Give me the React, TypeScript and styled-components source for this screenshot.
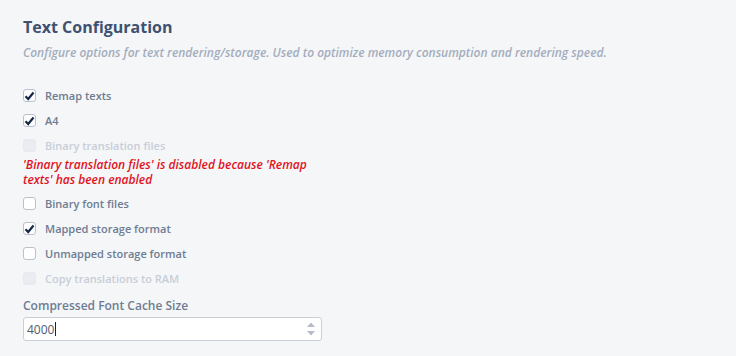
import styled, { createGlobalStyle } from 'styled-components'

const GlobalStyle = createGlobalStyle`
  html, body {
    margin: 0;
    padding: 0;
    background: #f5f6f8;
  }
  body {
    font-family: 'Open Sans', 'Liberation Sans', sans-serif;
  }
`

const Page = styled.div`
  display: flex;
  flex-direction: column;
  padding: 14px 23px 0;
  width: 736px;
  height: 356px;
  box-sizing: border-box;
`

const Title = styled.h2`
  margin: 0;
  font-size: 16px;
  font-weight: 700;
  line-height: 26px;
  color: #3e5170;
`

const Subtitle = styled.p`
  margin: 5px 0 0;
  font-size: 12px;
  font-style: italic;
  font-weight: 600;
  line-height: 16px;
  color: #a3adbd;
`

const Options = styled.div`
  display: flex;
  flex-direction: column;
  margin-top: 22px;
`

const Row = styled.label<{ $disabled?: boolean }>`
  display: flex;
  align-items: center;
  gap: 9px;
  height: 25px;
  font-size: 11px;
  font-weight: 600;
  color: ${(p) => (p.$disabled ? '#c7ced8' : '#6e7c92')};
`

const Box = styled.span<{ $disabled?: boolean }>`
  display: flex;
  align-items: center;
  justify-content: center;
  width: 13px;
  height: 13px;
  box-sizing: border-box;
  border-radius: 3px;
  border: 1px solid ${(p) => (p.$disabled ? '#e6e9ee' : '#b9c1cd')};
  background: ${(p) => (p.$disabled ? '#e9ecf0' : '#ffffff')};
`

const ErrorText = styled.div`
  width: 300px;
  margin: -1px 0 4px;
  font-size: 12px;
  font-style: italic;
  font-weight: 600;
  line-height: 15px;
  color: #e0141e;
`

const FieldLabel = styled.div`
  margin-top: 7px;
  font-size: 12px;
  font-weight: 600;
  line-height: 16px;
  color: #6e7c92;
`

const Field = styled.div`
  position: relative;
  display: flex;
  align-items: center;
  margin-top: 3px;
  width: 299px;
  height: 24px;
  box-sizing: border-box;
  padding: 0 3px;
  border: 1px solid #c9cfd8;
  border-radius: 3px;
  background: #ffffff;
  font-size: 12px;
  color: #4f5b6d;
`

const Caret = styled.span`
  display: inline-block;
  width: 1px;
  height: 14px;
  margin-left: 1px;
  background: #222;
`

const Spinner = styled.svg`
  position: absolute;
  right: 5px;
  top: 3px;
`

const Check = () => (
  <svg width="11" height="10" viewBox="0 0 11 10">
    <path d="M1.5 5.2 L4.2 8 L9.5 1.5" fill="none" stroke="#16294a" strokeWidth="2.2" strokeLinejoin="miter" />
  </svg>
)

type Opt = { label: string; checked?: boolean; disabled?: boolean }

const Option = ({ label, checked, disabled }: Opt) => (
  <Row $disabled={disabled}>
    <Box $disabled={disabled}>{checked && <Check />}</Box>
    {label}
  </Row>
)

export default function App() {
  return (
    <Page>
      <GlobalStyle />
      <Title>Text Configuration</Title>
      <Subtitle>Configure options for text rendering/storage. Used to optimize memory consumption and rendering speed.</Subtitle>
      <Options>
        <Option label="Remap texts" checked />
        <Option label="A4" checked />
        <Option label="Binary translation files" disabled />
        <ErrorText>'Binary translation files' is disabled because 'Remap texts' has been enabled</ErrorText>
        <Option label="Binary font files" />
        <Option label="Mapped storage format" checked />
        <Option label="Unmapped storage format" />
        <Option label="Copy translations to RAM" disabled />
      </Options>
      <FieldLabel>Compressed Font Cache Size</FieldLabel>
      <Field>
        4000
        <Caret />
        <Spinner width="10" height="16" viewBox="0 0 10 16">
          <path d="M1 6 L5 1.5 L9 6 Z" fill="#b5bcc7" />
          <path d="M1 10 L5 14.5 L9 10 Z" fill="#b5bcc7" />
        </Spinner>
      </Field>
    </Page>
  )
}
